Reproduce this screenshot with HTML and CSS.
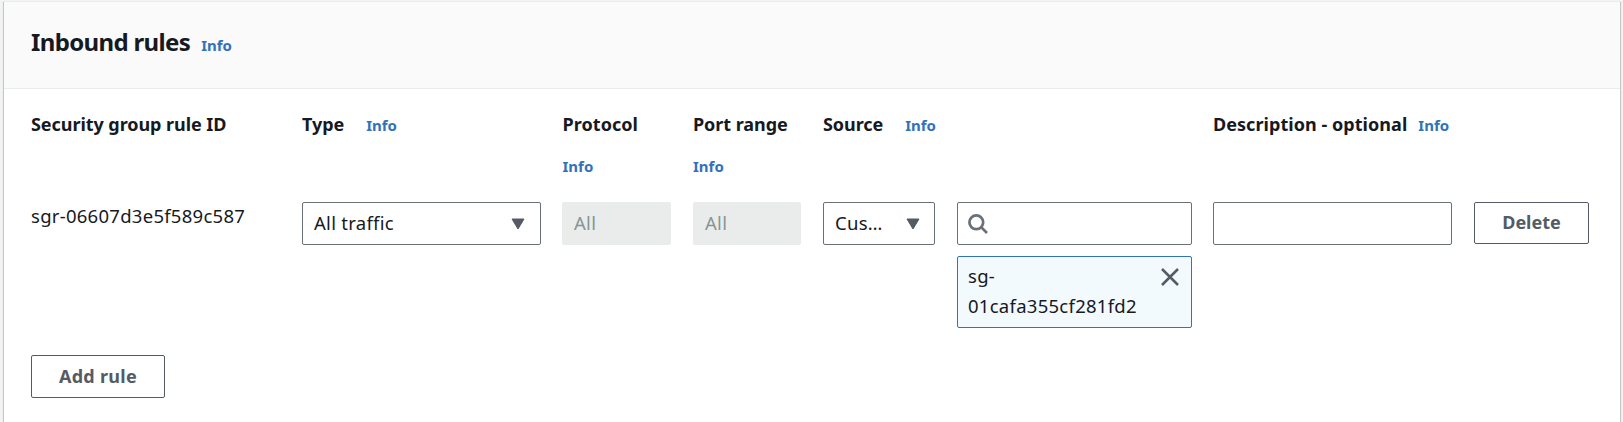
FILE: index.html
```html
<!DOCTYPE html>
<html lang="en">
<head>
<meta charset="utf-8">
<title>Inbound rules</title>
<link rel="stylesheet" href="styles.css">
</head>
<body>
<section class="panel">
  <header class="panel-header">
    <h2 class="title">Inbound rules</h2>
    <a class="info">Info</a>
  </header>
  <div class="panel-body">
    <div class="grid labels">
      <div class="label"><span>Security group rule ID</span></div>
      <div class="label"><span>Type</span><a class="info">Info</a></div>
      <div class="label stacked protocol"><span>Protocol</span><a class="info">Info</a></div>
      <div class="label stacked"><span>Port range</span><a class="info">Info</a></div>
      <div class="label source"><span>Source</span><a class="info">Info</a></div>
      <div class="label description"><span>Description - optional</span><a class="info">Info</a></div>
    </div>
    <div class="grid rule">
      <div class="rule-id">sgr-06607d3e5f589c587</div>
      <div class="field select"><span>All traffic</span><svg class="caret" viewBox="0 0 14 12"><path d="M1 1h12L7 11z"/></svg></div>
      <div class="field disabled">All</div>
      <div class="field disabled">All</div>
      <div class="field select narrow"><span>Cus…</span><svg class="caret" viewBox="0 0 14 12"><path d="M1 1h12L7 11z"/></svg></div>
      <div class="source-search">
        <div class="field search"><svg class="search-icon" viewBox="0 0 20 20"><circle cx="8.3" cy="8.3" r="6.9"/><path d="M13 13l6 6"/></svg></div>
        <div class="token">
          <span>sg-<br>01cafa355cf281fd2</span>
          <svg class="close-icon" viewBox="0 0 18 18"><path d="M1 1l16 16M17 1L1 17"/></svg>
        </div>
      </div>
      <div class="field"></div>
      <button class="button delete">Delete</button>
    </div>
    <button class="button add">Add rule</button>
  </div>
</section>
</body>
</html>
```
FILE: styles.css
```css
* { box-sizing: border-box; }

body {
  margin: 0;
  padding: 1px 3px 0 4px;
  height: 422px;
  overflow: hidden;
  background: #f2f3f3;
  color: #16191f;
  font: 18.5px/29px "Noto Sans", sans-serif;
  letter-spacing: 0.27px;
}

.panel {
  height: 440px;
  background: #fff;
  box-shadow: 0 1px 1px rgba(0, 28, 36, 0.3), 1px 1px 1px rgba(0, 28, 36, 0.15), -1px 1px 1px rgba(0, 28, 36, 0.15);
  border-top: 1px solid #eaeded;
}

.panel-header {
  display: flex;
  align-items: baseline;
  gap: 10px;
  height: 87px;
  padding: 23px 27px 0;
  background: #fafafa;
  border-bottom: 1px solid #eaeded;
}

.title {
  margin: 0;
  font-size: 24px;
  font-weight: 700;
  line-height: 34px;
  letter-spacing: -0.65px;
}

.info {
  color: #3272b8;
  font-size: 15px;
  font-weight: 700;
  letter-spacing: 0;
  margin-left: 1px;
}

.panel-body { padding: 20px 31px 0 27px; }

.grid {
  display: grid;
  grid-template-columns: 250px 239px 110px 109px 113px 235px 240px 115px;
  column-gap: 21px;
  align-items: start;
}

.labels { height: 93px; }

.label {
  display: flex;
  align-items: baseline;
  gap: 21px;
  font-size: 18px;
  font-weight: 700;
  line-height: 30px;
  letter-spacing: -0.06px;
  white-space: nowrap;
}

.label.stacked {
  flex-direction: column;
  align-items: flex-start;
  gap: 12px;
}

.label.stacked .info { margin-left: 0; }
.label.protocol { padding-left: 0.5px; letter-spacing: 0.05px; }
.label.source { grid-column: span 2; }
.label.description { gap: 10px; letter-spacing: 0.05px; }

.rule-id { line-height: 28px; }

.field {
  display: flex;
  align-items: center;
  height: 43px;
  padding: 0 11px;
  border: 1px solid #687078;
  border-radius: 2px;
  background: #fff;
}

.rule > .field:not(:nth-child(2)) { margin-right: 1px; }

.field.select {
  justify-content: space-between;
  padding-right: 15px;
}

.field.select.narrow { padding-right: 14px; }

.field.select span { margin-top: -2px; }

.field.disabled {
  padding-bottom: 2px;
  background: #eaeceb;
  border-color: #eaeceb;
  color: #879596;
}

.caret { width: 14px; height: 12px; fill: #545b64; stroke: #545b64; stroke-linejoin: round; }

.field.search { padding: 0 10px; }

.search-icon { width: 20px; height: 20px; fill: none; stroke: #687078; stroke-width: 2.7; }

.source-search {
  display: flex;
  flex-direction: column;
  gap: 11px;
}

.token {
  display: flex;
  justify-content: space-between;
  height: 72px;
  padding: 4px 12px 0 10px;
  border: 1px solid #3272b8;
  border-radius: 2px;
  background: #f2fafd;
  line-height: 30px;
}

.close-icon {
  width: 18px;
  height: 18px;
  margin-top: 7px;
  fill: none;
  stroke: #545b64;
  stroke-width: 2.5;
}

.button {
  display: flex;
  align-items: center;
  justify-content: center;
  padding: 0 0 2px;
  border: 1px solid #545b64;
  border-radius: 2px;
  background: #fff;
  color: #545b64;
  font: 700 18px/30px "Noto Sans", sans-serif;
}

.delete { height: 42px; letter-spacing: 0; }
.add { width: 134px; height: 43px; margin-top: 27px; letter-spacing: 0.3px; }
```
